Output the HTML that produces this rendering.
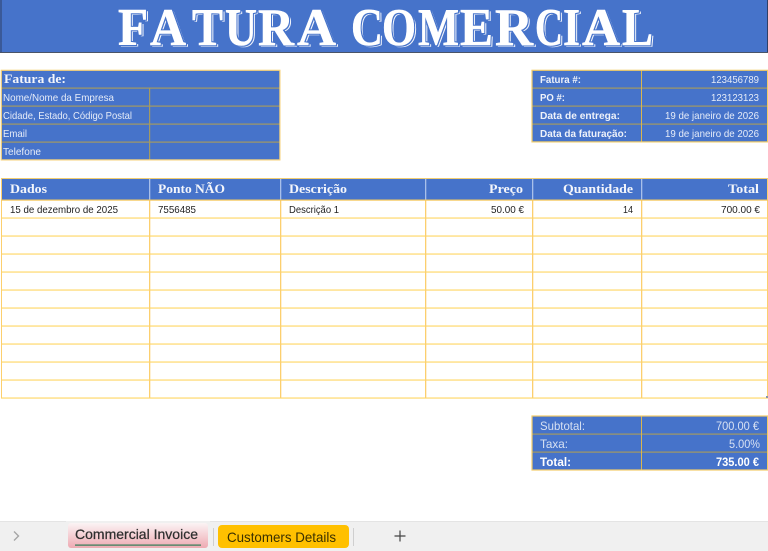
<!DOCTYPE html>
<html><head><meta charset="utf-8"><style>
html,body{margin:0;padding:0;background:#fff;width:768px;height:551px;overflow:hidden}
svg{display:block}
text{font-family:"Liberation Sans",sans-serif;font-size:10.5px;fill:#e6ecf8}
.s{font-family:"Liberation Serif",serif;font-weight:bold;font-size:12.5px;fill:#f4f6fb}
.b{font-weight:bold;fill:#eef2fa}
.k{fill:#222}
.t{font-size:12px}
.ti text{font-family:"Liberation Serif",serif;font-weight:bold;font-size:53px;fill:#fff;stroke:#fff;stroke-width:.6px}
</style></head><body>
<svg width="768" height="551" viewBox="0 0 768 551" xmlns="http://www.w3.org/2000/svg">
<defs>
<filter id="tf" filterUnits="userSpaceOnUse" x="100" y="0" width="570" height="52" color-interpolation-filters="sRGB">
<feOffset in="SourceAlpha" dx="2" dy="1.6" result="o"/>
<feFlood flood-color="#f2f5fc" result="w"/>
<feComposite in="w" in2="o" operator="in" result="sh"/>
<feMorphology in="SourceAlpha" operator="dilate" radius="1" result="d"/>
<feFlood flood-color="#4673ca" result="bl"/>
<feComposite in="bl" in2="d" operator="in" result="gap"/>
<feMerge><feMergeNode in="sh"/><feMergeNode in="gap"/><feMergeNode in="SourceGraphic"/></feMerge>
</filter>
<linearGradient id="g" x1="0" y1="0" x2="0" y2="1"><stop offset="0" stop-color="#fbf3f4"/><stop offset="1" stop-color="#eeaab2"/></linearGradient>
</defs>
<rect width="768" height="551" fill="#fff"/>
<!-- title -->
<rect x="0" y="0" width="768" height="53" fill="#4673ca"/>
<rect x="0" y="52" width="768" height="1" fill="#4a5468"/>
<rect x="0.5" y="0" width="1" height="52" fill="#2f3f66"/>
<rect x="767" y="0" width="1" height="52" fill="#2f3f66"/>
<g class="ti" filter="url(#tf)">
<text x="118" y="45" textLength="30" lengthAdjust="spacingAndGlyphs">F</text>
<text x="150" y="45" textLength="36" lengthAdjust="spacingAndGlyphs">A</text>
<text x="192" y="45" textLength="31" lengthAdjust="spacingAndGlyphs">T</text>
<text x="225" y="45" textLength="32" lengthAdjust="spacingAndGlyphs">U</text>
<text x="258" y="45" textLength="36" lengthAdjust="spacingAndGlyphs">R</text>
<text x="297" y="45" textLength="39" lengthAdjust="spacingAndGlyphs">A</text>
<text x="351" y="45" textLength="32" lengthAdjust="spacingAndGlyphs">C</text>
<text x="382" y="45" textLength="34" lengthAdjust="spacingAndGlyphs">O</text>
<text x="418" y="45" textLength="41" lengthAdjust="spacingAndGlyphs">M</text>
<text x="460" y="45" textLength="33" lengthAdjust="spacingAndGlyphs">E</text>
<text x="495" y="45" textLength="38" lengthAdjust="spacingAndGlyphs">R</text>
<text x="535" y="45" textLength="28" lengthAdjust="spacingAndGlyphs">C</text>
<text x="563" y="45" textLength="17" lengthAdjust="spacingAndGlyphs">I</text>
<text x="582" y="45" textLength="38" lengthAdjust="spacingAndGlyphs">A</text>
<text x="622" y="45" textLength="31" lengthAdjust="spacingAndGlyphs">L</text>
</g>
<!-- from table -->
<rect x="1" y="70" width="279" height="90" fill="#4673ca"/>
<g fill="#a39a63">
<rect x="1" y="87.5" width="279" height="1.2"/><rect x="1" y="105.5" width="279" height="1.2"/><rect x="1" y="123.5" width="279" height="1.2"/><rect x="1" y="141.5" width="279" height="1.2"/>
<rect x="149" y="88" width="1.2" height="72"/>
</g>
<rect x="1.3" y="70.3" width="278.6" height="89.6" fill="none" stroke="#f7d27a" stroke-width="1.2"/>
<text class="s" x="4" y="83" textLength="62" lengthAdjust="spacingAndGlyphs">Fatura de:</text>
<text x="3" y="101" textLength="111" lengthAdjust="spacingAndGlyphs">Nome/Nome da Empresa</text>
<text x="3" y="119" textLength="129" lengthAdjust="spacingAndGlyphs">Cidade, Estado, Código Postal</text>
<text x="3" y="137" textLength="24" lengthAdjust="spacingAndGlyphs">Email</text>
<text x="3" y="155" textLength="38" lengthAdjust="spacingAndGlyphs">Telefone</text>
<!-- invoice info -->
<rect x="532" y="70" width="236" height="72" fill="#4673ca"/>
<g fill="#a39a63">
<rect x="532" y="87.5" width="236" height="1.2"/><rect x="532" y="105.5" width="236" height="1.2"/><rect x="532" y="123.5" width="236" height="1.2"/>
</g>
<rect x="641" y="70" width="1" height="72" fill="#d9b64f"/>
<rect x="532" y="70.3" width="235.6" height="71.6" fill="none" stroke="#f2cc68" stroke-width="1.2"/>
<text class="b" x="540" y="83" textLength="41" lengthAdjust="spacingAndGlyphs">Fatura #:</text>
<text class="b" x="540" y="101" textLength="25" lengthAdjust="spacingAndGlyphs">PO #:</text>
<text class="b" x="540" y="119" textLength="80" lengthAdjust="spacingAndGlyphs">Data de entrega:</text>
<text class="b" x="540" y="137" textLength="87" lengthAdjust="spacingAndGlyphs">Data da faturação:</text>
<text x="711" y="83" textLength="48" lengthAdjust="spacingAndGlyphs">123456789</text>
<text x="711" y="101" textLength="48" lengthAdjust="spacingAndGlyphs">123123123</text>
<text x="665" y="119" textLength="94" lengthAdjust="spacingAndGlyphs">19 de janeiro de 2026</text>
<text x="665" y="137" textLength="94" lengthAdjust="spacingAndGlyphs">19 de janeiro de 2026</text>
<!-- main table -->
<rect x="1" y="178" width="767" height="22" fill="#4673ca"/>
<g fill="#ffe08a">
<rect x="1" y="217.3" width="767" height="1.5"/><rect x="1" y="235.3" width="767" height="1.5"/><rect x="1" y="253.3" width="767" height="1.5"/><rect x="1" y="271.3" width="767" height="1.5"/><rect x="1" y="289.3" width="767" height="1.5"/><rect x="1" y="307.3" width="767" height="1.5"/><rect x="1" y="325.3" width="767" height="1.5"/><rect x="1" y="343.3" width="767" height="1.5"/><rect x="1" y="361.3" width="767" height="1.5"/><rect x="1" y="379.3" width="767" height="1.5"/><rect x="1" y="397.3" width="767" height="1.5"/>
</g>
<g fill="#fccf6e">
<rect x="149" y="200" width="1.3" height="198"/><rect x="280" y="200" width="1.3" height="198"/><rect x="425" y="200" width="1.3" height="198"/><rect x="532" y="200" width="1.3" height="198"/><rect x="641" y="200" width="1.3" height="198"/>
<rect x="1" y="178" width="1" height="220"/><rect x="767" y="178" width="1" height="220"/>
</g>
<g fill="#a9c0ea">
<rect x="149" y="179" width="1.3" height="21"/><rect x="280" y="179" width="1.3" height="21"/><rect x="425" y="179" width="1.3" height="21"/><rect x="532" y="179" width="1.3" height="21"/><rect x="641" y="179" width="1.3" height="21"/>
</g>
<rect x="1" y="178" width="767" height="1" fill="#f0cd72"/>
<rect x="1" y="199.5" width="767" height="1.2" fill="#f5c85c"/>
<text class="s" x="10" y="193" textLength="37" lengthAdjust="spacingAndGlyphs">Dados</text>
<text class="s" x="158" y="193" textLength="67" lengthAdjust="spacingAndGlyphs">Ponto NÃO</text>
<text class="s" x="289" y="193" textLength="58" lengthAdjust="spacingAndGlyphs">Descrição</text>
<text class="s" x="489" y="193" textLength="34" lengthAdjust="spacingAndGlyphs">Preço</text>
<text class="s" x="563" y="193" textLength="70" lengthAdjust="spacingAndGlyphs">Quantidade</text>
<text class="s" x="728" y="193" textLength="31" lengthAdjust="spacingAndGlyphs">Total</text>
<text class="k" x="10" y="213" textLength="108" lengthAdjust="spacingAndGlyphs">15 de dezembro de 2025</text>
<text class="k" x="158" y="213" textLength="38" lengthAdjust="spacingAndGlyphs">7556485</text>
<text class="k" x="289" y="213" textLength="50" lengthAdjust="spacingAndGlyphs">Descrição 1</text>
<text class="k" x="491" y="213" textLength="33" lengthAdjust="spacingAndGlyphs">50.00 €</text>
<text class="k" x="623" y="213" textLength="10" lengthAdjust="spacingAndGlyphs">14</text>
<text class="k" x="721" y="213" textLength="39" lengthAdjust="spacingAndGlyphs">700.00 €</text>
<rect x="766" y="396" width="2" height="2" fill="#8a94a6"/>
<!-- totals -->
<rect x="532" y="416" width="236" height="54" fill="#4673ca"/>
<g fill="#a39a63">
<rect x="532" y="433.5" width="236" height="1.2"/><rect x="532" y="451.5" width="236" height="1.2"/>
</g>
<rect x="641" y="416" width="1" height="54" fill="#d9b64f"/>
<rect x="532" y="416" width="235.6" height="54" fill="none" stroke="#f2cc68" stroke-width="1.2"/>
<text class="t" x="540" y="430" textLength="45" lengthAdjust="spacingAndGlyphs" style="fill:#d6e0f2">Subtotal:</text>
<text class="t" x="716" y="430" textLength="43" lengthAdjust="spacingAndGlyphs" style="fill:#d6e0f2">700.00 €</text>
<text class="t" x="540" y="448" textLength="28" lengthAdjust="spacingAndGlyphs" style="fill:#d6e0f2">Taxa:</text>
<text class="t" x="729" y="448" textLength="31" lengthAdjust="spacingAndGlyphs" style="fill:#d6e0f2">5.00%</text>
<text class="t b" x="540" y="466" textLength="31" lengthAdjust="spacingAndGlyphs" style="fill:#fff">Total:</text>
<text class="t b" x="716" y="466" textLength="43" lengthAdjust="spacingAndGlyphs" style="fill:#fff">735.00 €</text>
<!-- tab bar -->
<rect x="0" y="521" width="768" height="30" fill="#f0f0f0"/>
<rect x="0" y="521" width="66" height="1" fill="#e4e4e4"/>
<rect x="210" y="521" width="558" height="1" fill="#e4e4e4"/>
<path d="M14 531.5l4.5 4.5-4.5 4.5" fill="none" stroke="#a5a5a5" stroke-width="1.4"/>
<rect x="68" y="523" width="140" height="25" rx="3" fill="url(#g)"/>
<text x="75" y="539" textLength="123" lengthAdjust="spacingAndGlyphs" style="font-size:14px;fill:#2f2f2f;stroke:#2f2f2f;stroke-width:.25px">Commercial Invoice</text>
<rect x="75" y="544.5" width="126" height="1.2" fill="#2f7d56"/>
<rect x="213" y="528" width="1" height="18" fill="#cfcfcf"/>
<rect x="218" y="525" width="131" height="23" rx="4" fill="#ffc000"/>
<text x="227" y="542" textLength="109" lengthAdjust="spacingAndGlyphs" style="font-size:14px;fill:#3a3000">Customers Details</text>
<rect x="353" y="528" width="1" height="18" fill="#cfcfcf"/>
<path d="M400 530.5v11M394.5 536h11" fill="none" stroke="#444" stroke-width="1.2"/>
</svg>
</body></html>
